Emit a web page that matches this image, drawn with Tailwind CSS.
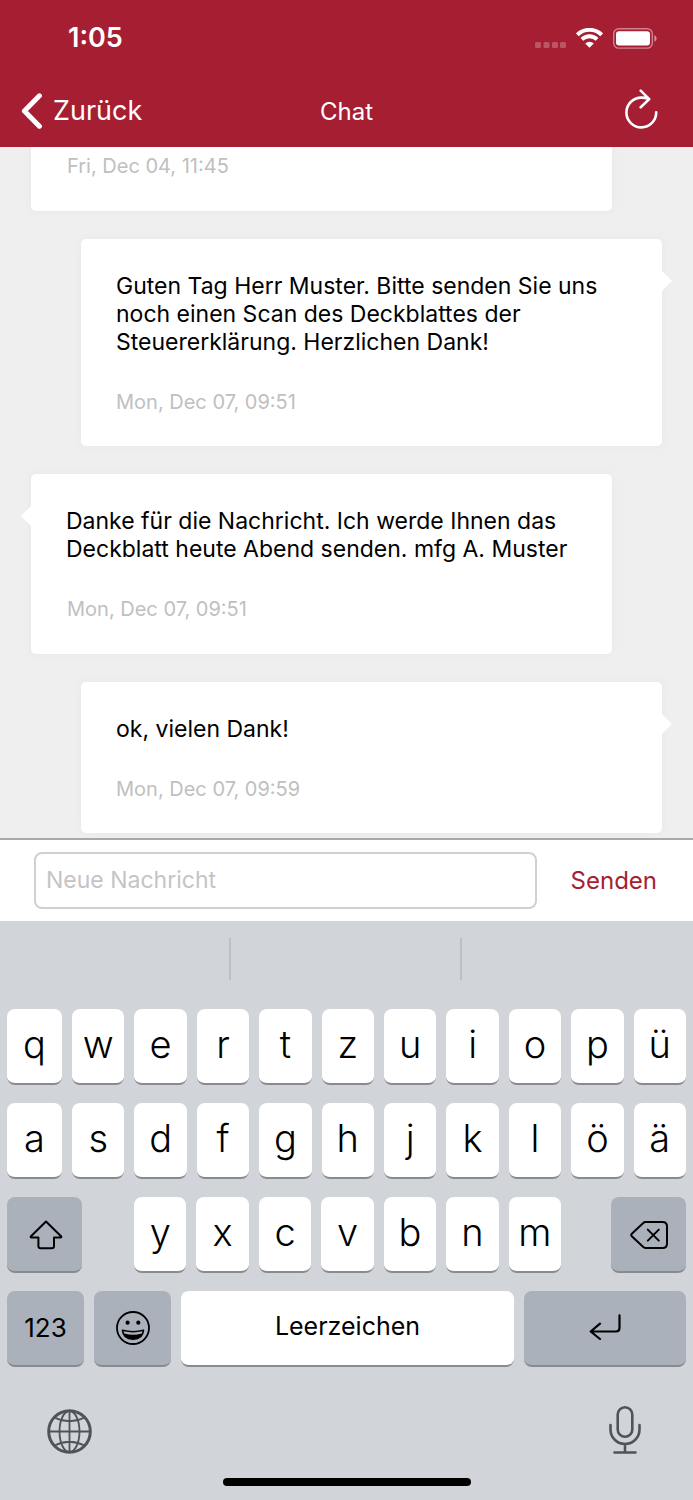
<!DOCTYPE html>
<html lang="de">
<head>
<meta charset="utf-8">
<meta name="viewport" content="width=device-width, initial-scale=1">
<title>Chat</title>
<script src="https://cdn.jsdelivr.net/npm/@tailwindcss/browser@4"></script>
</head>
<body class="flex min-h-screen flex-col bg-[#efefef] font-['Inter',sans-serif] text-black">

<header class="bg-[#a51e31] text-white">
  <div class="flex h-[76px] items-center justify-between pr-[36px] pl-[68px]">
    <span class="text-[27px] leading-8 font-semibold">1:05</span>
    <div class="flex items-center">
      <svg class="mt-[13px] mr-[10px] h-[6px] w-[31px]" viewBox="0 0 31 6" fill="#fff" fill-opacity=".25" aria-label="Kein Signal"><rect width="6" height="6" rx="1.5"/><rect x="8.5" width="6" height="6" rx="1.5"/><rect x="17" width="6" height="6" rx="1.5"/><rect x="25" width="6" height="6" rx="1.5"/></svg>
      <svg class="mr-[10px] h-[20px] w-[27px]" viewBox="0 0 27 20" fill="none" stroke="#fff" aria-label="WLAN"><path d="M1.4 6.8a17.2 17.2 0 0 1 24.2 0" stroke-width="4"/><path d="M5.9 11.4a10.8 10.8 0 0 1 15.2 0" stroke-width="3.8"/><path d="M9.2 15.4a6.1 6.1 0 0 1 8.6 0L13.500 19.800Z" fill="#fff" stroke="none"/></svg>
      <svg class="h-[21px] w-[44px]" viewBox="0 0 44 21" aria-label="Akku voll"><rect x=".7" y=".7" width="38.600" height="19.400" rx="5" fill="none" stroke="#fff" stroke-opacity=".45" stroke-width="1.400"/><rect x="3" y="3.200" width="34" height="14.400" rx="3" fill="#fff"/><path d="M41.300 7.200c3 1.200 3 5.200 0 6.400z" fill="#fff" fill-opacity=".5"/></svg>
    </div>
  </div>
  <nav class="grid h-[71px] grid-cols-3 items-center pr-[35px] pl-[21px]">
    <a href="#" class="flex items-center gap-[11px] pb-[2px] text-[27px] leading-8">
      <svg class="h-[36px] w-[21px]" viewBox="0 0 21 36" fill="none" stroke="#fff" stroke-width="5" stroke-linecap="round" stroke-linejoin="round"><path d="M18.400 2.800 3.400 18l15 15.200"/></svg>
      Zurück
    </a>
    <h1 class="pl-[14px] text-center text-[24px] leading-8">Chat</h1>
    <button type="button" aria-label="Aktualisieren" class="justify-self-end pb-1">
      <svg class="mb-[2px] h-[40px] w-[33px]" viewBox="0 0 33 40" fill="none" stroke="#fff" stroke-width="2.600" stroke-linecap="round" stroke-linejoin="round"><path d="M31.200 23.300A14.900 14.900 0 1 1 16.300 8.600q4.300 0 7.500 1.300M15.700 1.700l8.500 8.400-8.500 8.200"/></svg>
    </button>
  </nav>
</header>

<main class="flex flex-1 flex-col gap-7 overflow-hidden pb-[5px] text-[23px] leading-7">
  <article class="mr-[81px] ml-[31px] rounded-b-[5px] bg-white px-[35px] pt-[5px] pb-[31px] shadow-[0_0_10px_rgba(0,0,0,0.04)]">
    <time class="block pl-px text-[20px] text-[#c0c0c0]">Fri, Dec 04, 11:45</time>
  </article>
  <article class="relative mr-[31px] ml-[81px] rounded-[5px] bg-white px-[35px] pt-[33px] pb-[30px] shadow-[0_0_10px_rgba(0,0,0,0.04)]">
    <svg class="absolute top-8 left-full h-5 w-[10px]" viewBox="0 0 10 20" fill="#fff"><path d="M0 0l10 10L0 20z"/></svg>
    <p>Guten Tag Herr Muster. Bitte senden Sie uns<br>noch einen Scan des Deckblattes der<br>Steuererklärung. Herzlichen Dank!</p>
    <time class="mt-8 block text-[20px] text-[#c0c0c0]">Mon, Dec 07, 09:51</time>
  </article>
  <article class="relative mr-[81px] ml-[31px] rounded-[5px] bg-white px-[35px] pt-[33px] pb-[31px] shadow-[0_0_10px_rgba(0,0,0,0.04)]">
    <svg class="absolute top-8 right-full h-5 w-[10px]" viewBox="0 0 10 20" fill="#fff"><path d="M10 0L0 10l10 10z"/></svg>
    <p>Danke für die Nachricht. Ich werde Ihnen das<br>Deckblatt heute Abend senden. mfg A. Muster</p>
    <time class="mt-8 block pl-px text-[20px] text-[#c0c0c0]">Mon, Dec 07, 09:51</time>
  </article>
  <article class="relative mr-[31px] ml-[81px] rounded-[5px] bg-white px-[35px] pt-[33px] pb-[30px] shadow-[0_0_10px_rgba(0,0,0,0.04)]">
    <svg class="absolute top-8 left-full h-5 w-[10px]" viewBox="0 0 10 20" fill="#fff"><path d="M0 0l10 10L0 20z"/></svg>
    <p>ok, vielen Dank!</p>
    <time class="mt-8 block text-[20px] text-[#c0c0c0]">Mon, Dec 07, 09:59</time>
  </article>
</main>

<form class="flex items-center gap-[34px] border-t-2 border-[#a9a9a9] bg-white pt-3 pr-[36px] pb-3 pl-[34px]">
  <input type="text" aria-label="Neue Nachricht" placeholder="Neue Nachricht" class="h-[57px] min-w-0 flex-1 rounded-[8px] border-2 border-[#d0d0d0] bg-white px-[10px] pb-[2px] text-[23px] placeholder:text-[#c4c4c6]">
  <button type="button" class="text-[24px] leading-8 text-[#a51e31]">Senden</button>
</form>

<section aria-label="Tastatur" class="flex flex-col bg-[#d1d4d9] px-[7px] pb-[14px]">
  <div class="-mx-[7px] mt-[17px] mb-[29px] grid h-[42px] grid-cols-3 divide-x-2 divide-[#bcc0c5]"><span></span><span></span><span></span></div>
  <div class="flex flex-col gap-[18px] text-[38px] leading-[48px] font-light">
    <div class="grid grid-cols-[55px_repeat(10,minmax(0,1fr))] gap-[10px]">
      <button type="button" class="h-[76px] rounded-[8px] border-b-2 border-[#898a8d] bg-white pb-1">q</button>
      <button type="button" class="h-[76px] rounded-[8px] border-b-2 border-[#898a8d] bg-white pb-1">w</button>
      <button type="button" class="h-[76px] rounded-[8px] border-b-2 border-[#898a8d] bg-white pb-1">e</button>
      <button type="button" class="h-[76px] rounded-[8px] border-b-2 border-[#898a8d] bg-white pb-1">r</button>
      <button type="button" class="h-[76px] rounded-[8px] border-b-2 border-[#898a8d] bg-white pb-1">t</button>
      <button type="button" class="h-[76px] rounded-[8px] border-b-2 border-[#898a8d] bg-white pb-1">z</button>
      <button type="button" class="h-[76px] rounded-[8px] border-b-2 border-[#898a8d] bg-white pb-1">u</button>
      <button type="button" class="h-[76px] rounded-[8px] border-b-2 border-[#898a8d] bg-white pb-1">i</button>
      <button type="button" class="h-[76px] rounded-[8px] border-b-2 border-[#898a8d] bg-white pb-1">o</button>
      <button type="button" class="h-[76px] rounded-[8px] border-b-2 border-[#898a8d] bg-white pb-1">p</button>
      <button type="button" class="h-[76px] rounded-[8px] border-b-2 border-[#898a8d] bg-white pb-1">ü</button>
    </div>
    <div class="grid grid-cols-[55px_repeat(10,minmax(0,1fr))] gap-[10px]">
      <button type="button" class="h-[76px] rounded-[8px] border-b-2 border-[#898a8d] bg-white pb-1">a</button>
      <button type="button" class="h-[76px] rounded-[8px] border-b-2 border-[#898a8d] bg-white pb-1">s</button>
      <button type="button" class="h-[76px] rounded-[8px] border-b-2 border-[#898a8d] bg-white pb-1">d</button>
      <button type="button" class="h-[76px] rounded-[8px] border-b-2 border-[#898a8d] bg-white pb-1">f</button>
      <button type="button" class="h-[76px] rounded-[8px] border-b-2 border-[#898a8d] bg-white pb-1">g</button>
      <button type="button" class="h-[76px] rounded-[8px] border-b-2 border-[#898a8d] bg-white pb-1">h</button>
      <button type="button" class="h-[76px] rounded-[8px] border-b-2 border-[#898a8d] bg-white pb-1">j</button>
      <button type="button" class="h-[76px] rounded-[8px] border-b-2 border-[#898a8d] bg-white pb-1">k</button>
      <button type="button" class="h-[76px] rounded-[8px] border-b-2 border-[#898a8d] bg-white pb-1">l</button>
      <button type="button" class="h-[76px] rounded-[8px] border-b-2 border-[#898a8d] bg-white pb-1">ö</button>
      <button type="button" class="h-[76px] rounded-[8px] border-b-2 border-[#898a8d] bg-white pb-1">ä</button>
    </div>
    <div class="flex">
      <button type="button" aria-label="Umschalten" class="flex h-[76px] w-[75px] items-center justify-center rounded-[8px] border-b-2 border-[#898a8d] bg-[#abb1bb] pt-[2px] pl-[2px]">
        <svg class="h-[30px] w-[34px]" viewBox="0 0 34 30" fill="none" stroke="#000" stroke-width="2" stroke-linejoin="round"><path d="M17 1.500 32 16.200q1 1.300-.6 1.300H25V26q0 2.200-2.200 2.200H11.600Q9.400 28.200 9.400 26V17.500H2.600Q1 17.500 2 16.200Z"/></svg>
      </button>
      <div class="mr-[50px] ml-[52px] grid flex-1 grid-cols-7 gap-[10px]">
        <button type="button" class="h-[76px] rounded-[8px] border-b-2 border-[#898a8d] bg-white pb-1">y</button>
        <button type="button" class="h-[76px] rounded-[8px] border-b-2 border-[#898a8d] bg-white pb-1">x</button>
        <button type="button" class="h-[76px] rounded-[8px] border-b-2 border-[#898a8d] bg-white pb-1">c</button>
        <button type="button" class="h-[76px] rounded-[8px] border-b-2 border-[#898a8d] bg-white pb-1">v</button>
        <button type="button" class="h-[76px] rounded-[8px] border-b-2 border-[#898a8d] bg-white pb-1">b</button>
        <button type="button" class="h-[76px] rounded-[8px] border-b-2 border-[#898a8d] bg-white pb-1">n</button>
        <button type="button" class="h-[76px] rounded-[8px] border-b-2 border-[#898a8d] bg-white pb-1">m</button>
      </div>
      <button type="button" aria-label="Löschen" class="flex h-[76px] w-[75px] items-center justify-center rounded-[8px] border-b-2 border-[#898a8d] bg-[#abb1bb] pt-[2px]">
        <svg class="h-[28px] w-[38px]" viewBox="0 0 38 28" fill="none" stroke="#000" stroke-width="2" stroke-linejoin="round" stroke-linecap="round"><path d="M15.500 1H32.500Q37 1 37 5.500V22.500Q37 27 32.500 27H15.500Q14.200 27 13 25.800L1.800 15.200Q.6 14 1.800 12.800L13 2.200Q14.200 1 15.500 1ZM17.800 8.600l11 11M28.800 8.600l-11 11"/></svg>
      </button>
    </div>
    <div class="flex gap-[10px] text-[26px] leading-8 font-normal">
      <button type="button" class="h-[76px] w-[77px] rounded-[8px] border-b-2 border-[#898a8d] bg-[#abb1bb]">123</button>
      <button type="button" aria-label="Emoji" class="flex h-[76px] w-[77px] items-center justify-center rounded-[8px] border-b-2 border-[#898a8d] bg-[#abb1bb]">
        <svg class="h-[34px] w-[34px]" viewBox="0 0 34 34"><circle cx="17" cy="17" r="16" fill="none" stroke="#000" stroke-width="1.800"/><circle cx="11.600" cy="11.700" r="2.100"/><circle cx="22.300" cy="11.700" r="2.100"/><path d="M6.300 19q10.700 3 21.400 0-.6 9.300-10.700 9.300T6.300 19Z" fill="#000" stroke="#000" stroke-width="1.200" stroke-linejoin="round"/><path d="M7.500 20.300q9.500 2.300 19 0l-.8 2.200q-8.700 2.600-17.400 0Z" fill="#abb1bb"/></svg>
      </button>
      <button type="button" class="h-[76px] flex-1 rounded-[8px] border-b-2 border-[#898a8d] bg-white pb-1 text-[25px]">Leerzeichen</button>
      <button type="button" aria-label="Eingabe" class="flex h-[76px] w-[162px] items-center justify-center rounded-[8px] border-b-2 border-[#898a8d] bg-[#abb1bb] pb-[2px]">
        <svg class="h-[26px] w-[32px]" viewBox="0 0 32 26" fill="none" stroke="#000" stroke-width="2.200" stroke-linecap="round" stroke-linejoin="round"><path d="M30.500 1.300V14q0 3.500-3.500 3.500H2M11 9.700 1.700 17.500 11 25"/></svg>
      </button>
    </div>
  </div>
  <div class="mt-[38px] mb-[23px] flex items-center justify-between px-10">
    <button type="button" aria-label="Sprache wechseln">
      <svg class="mt-[3px] h-[45px] w-[45px]" viewBox="0 0 45 45" fill="none" stroke="#505358" stroke-width="1.800"><circle cx="22.500" cy="22.500" r="20.800" stroke-width="3"/><ellipse cx="22.500" cy="22.500" rx="10" ry="20.500"/><path d="M22.500 2v41M2 22.500h41M7.500 8.500q15 7.500 30 0M7.500 36.500q15-7.500 30 0"/></svg>
    </button>
    <button type="button" aria-label="Diktieren">
      <svg class="mr-[5px] h-[50px] w-[32px]" viewBox="0 0 32 50" fill="none" stroke="#505358" stroke-width="2.600" stroke-linecap="round"><rect x="8.700" y="2.300" width="14.600" height="29.400" rx="7.300"/><path d="M1.500 20v4.500a14.500 14.500 0 0 0 29 0V20M16 39.500V47M5.500 47.500h21"/></svg>
    </button>
  </div>
  <div class="mx-auto h-2 w-[248px] rounded-full bg-black"></div>
</section>
</body>
</html>
